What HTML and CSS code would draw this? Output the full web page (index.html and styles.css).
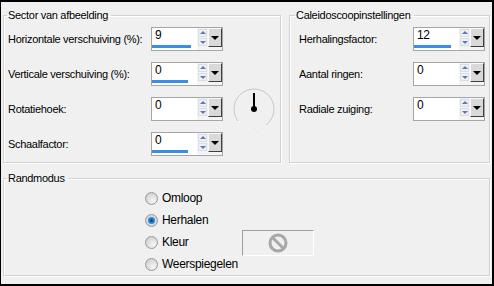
FILE: index.html
```html
<!DOCTYPE html>
<html lang="nl">

<head>
    <meta charset="UTF-8">
    <title>Caleidoscoop</title>
    <link rel="stylesheet" href="styles.css">
</head>

<body>
    <div class="top">
        <fieldset class="group sector">
            <legend>Sector van afbeelding</legend>
            <div class="grid grid-left">
                <span class="label">Horizontale verschuiving (%):</span>
                <div class="spin">
                    <div class="field"><span class="value">9</span><div class="bar" style="width: 39px"></div></div>
                    <div class="spin-btns"><span class="up"></span><span class="down"></span></div>
                    <span class="drop"></span>
                </div>
                <div class="dial">
                    <svg width="44" height="44" viewBox="0 0 44 44">
                        <circle cx="22" cy="22" r="20" fill="none" stroke="#c8c8c8" stroke-width="1"></circle>
                        <path d="M 34 38 A 20 20 0 0 1 6 34" fill="none" stroke="#ffffff" stroke-width="1"></path>
                        <line x1="22" y1="6" x2="22" y2="21" stroke="#000" stroke-width="2"></line>
                        <circle cx="22" cy="22" r="3" fill="#000"></circle>
                    </svg>
                </div>
                <span class="label">Verticale verschuiving (%):</span>
                <div class="spin">
                    <div class="field"><span class="value">0</span><div class="bar" style="width: 36px"></div></div>
                    <div class="spin-btns"><span class="up"></span><span class="down"></span></div>
                    <span class="drop"></span>
                </div>
                <span class="label">Rotatiehoek:</span>
                <div class="spin">
                    <div class="field"><span class="value">0</span></div>
                    <div class="spin-btns"><span class="up"></span><span class="down"></span></div>
                    <span class="drop"></span>
                </div>
                <span class="label">Schaalfactor:</span>
                <div class="spin">
                    <div class="field"><span class="value">0</span><div class="bar" style="width: 36px"></div></div>
                    <div class="spin-btns"><span class="up"></span><span class="down"></span></div>
                    <span class="drop"></span>
                </div>
            </div>
        </fieldset>
        <fieldset class="group caleido">
            <legend>Caleidoscoopinstellingen</legend>
            <div class="grid grid-right">
                <span class="label">Herhalingsfactor:</span>
                <div class="spin">
                    <div class="field"><span class="value">12</span><div class="bar" style="width: 37px"></div></div>
                    <div class="spin-btns"><span class="up"></span><span class="down"></span></div>
                    <span class="drop"></span>
                </div>
                <span class="label">Aantal ringen:</span>
                <div class="spin">
                    <div class="field"><span class="value">0</span></div>
                    <div class="spin-btns"><span class="up"></span><span class="down"></span></div>
                    <span class="drop"></span>
                </div>
                <span class="label">Radiale zuiging:</span>
                <div class="spin">
                    <div class="field"><span class="value">0</span></div>
                    <div class="spin-btns"><span class="up"></span><span class="down"></span></div>
                    <span class="drop"></span>
                </div>
            </div>
        </fieldset>
    </div>

    <fieldset class="group rand">
        <legend>Randmodus</legend>
        <div class="radios">
            <label class="radio"><span class="dot"></span>Omloop</label>
            <label class="radio"><span class="dot checked"></span>Herhalen</label>
            <label class="radio"><span class="dot"></span>Kleur</label>
            <div class="color-btn">
                <svg width="22" height="22" viewBox="0 0 22 22">
                    <circle cx="11" cy="11" r="8" fill="none" stroke="#a8a8a8" stroke-width="3"></circle>
                    <line x1="5.5" y1="5.5" x2="16.5" y2="16.5" stroke="#a8a8a8" stroke-width="3"></line>
                </svg>
            </div>
            <label class="radio"><span class="dot"></span>Weerspiegelen</label>
        </div>
    </fieldset>
</body>

</html>
```

FILE: styles.css
```css
* {
    box-sizing: border-box;
}

html {
    background-color: #000;
}

body {
    margin: 0;
    width: 494px;
    height: 286px;
    background-color: #f0f0f0;
    border-style: solid;
    border-color: #000;
    border-width: 2px 2px 2px 1px;
    font-family: "Liberation Sans", Arial, sans-serif;
    font-size: 11px;
    letter-spacing: -0.3px;
    color: #000;
    overflow: hidden;
}

.top {
    display: flex;
    gap: 8px;
    margin: 6px 2px 0 2px;
}

.group {
    margin: 0;
    padding: 0;
    min-width: 0;
    border: 1px solid #d3d3d3;
    box-shadow: inset 1px 1px 0 #fff, 1px 1px 0 #fff;
}

.group legend {
    margin-left: 3px;
    padding: 0 3px 0 1px;
    line-height: 14px;
}

.caleido legend {
    margin-left: 5px;
}

.sector {
    width: 278px;
    padding: 5px 0 6px 0;
}

.caleido {
    flex: 1;
    padding: 5px 0 6px 0;
}

.grid {
    display: grid;
    grid-auto-rows: 24px;
    row-gap: 11px;
    align-items: center;
}

.grid-left {
    grid-template-columns: 143px 72px 52px;
    margin-left: 4px;
}

.grid-right {
    grid-template-columns: 114px 72px;
    margin-left: 9px;
}

.grid .label {
    grid-column: 1;
}

.grid .spin {
    grid-column: 2;
}

.dial {
    grid-column: 3;
    grid-row: 2 / 5;
    align-self: center;
    margin-left: 9px;
    margin-top: -1px;
    width: 44px;
    height: 44px;
}

.dial svg {
    display: block;
}

/* spin box */
.spin {
    display: flex;
    height: 24px;
    border: 1px solid #a5a5a5;
    background-color: #f4f4f4;
}

.field {
    display: flex;
    flex-direction: column;
    width: 46px;
    background-color: #fff;
}

.value {
    padding: 1px 0 0 3px;
    line-height: 13px;
    font-size: 12px;
}

.bar {
    margin-top: auto;
    margin-bottom: 2px;
    height: 3px;
    background-color: #3a8ee6;
}

.spin-btns {
    display: flex;
    flex-direction: column;
    gap: 1px;
    width: 10px;
    padding: 1px 0 0 1px;
}

.up,
.down {
    position: relative;
    display: block;
    width: 9px;
    height: 8px;
    background-color: #eef0f4;
    border: 1px solid #d8dde6;
}

.up::after,
.down::after {
    content: "";
    position: absolute;
    left: 1px;
    border-left: 3px solid transparent;
    border-right: 3px solid transparent;
}

.up::after {
    top: 1px;
    border-bottom: 3px solid #5d79b0;
}

.down::after {
    top: 2px;
    border-top: 3px solid #5d79b0;
}

.drop {
    position: relative;
    width: 14px;
    height: 19px;
    margin-left: 1px;
    background-color: #d9d9d9;
    border: 1px solid;
    border-color: #fafafa #3f3f3f #3f3f3f #fafafa;
}

.drop::after {
    content: "";
    position: absolute;
    left: 2px;
    top: 7px;
    border-left: 4px solid transparent;
    border-right: 4px solid transparent;
    border-top: 4px solid #000;
}

/* randmodus */
.rand {
    margin: 8px 2px 0 2px;
    padding: 2px 0 0 0;
}

.radios {
    display: grid;
    grid-template-columns: 97px 72px;
    grid-auto-rows: 22px;
    align-items: center;
    margin-left: 141px;
}

.radio {
    grid-column: 1;
    display: flex;
    align-items: center;
    gap: 4px;
    font-size: 12px;
}

.dot {
    width: 13px;
    height: 13px;
    border-radius: 50%;
    border: 1px solid #9a9a9a;
    background: radial-gradient(circle at 65% 70%, #f6f6f6 0%, #dcdcdc 55%, #c4c4c4 100%);
}

.dot.checked {
    background: radial-gradient(circle at 50% 50%, #0b3f7a 0, #1f74c4 2px, #54a6e8 3.5px, #dcdcdc 4px, #c4c4c4 100%);
}

.color-btn {
    grid-column: 2;
    grid-row: 3;
    align-self: center;
    height: 26px;
    margin-top: 1px;
    display: flex;
    align-items: center;
    justify-content: center;
    border: 1px solid;
    border-color: #a0a0a0 #fff #fff #a0a0a0;
}
```
